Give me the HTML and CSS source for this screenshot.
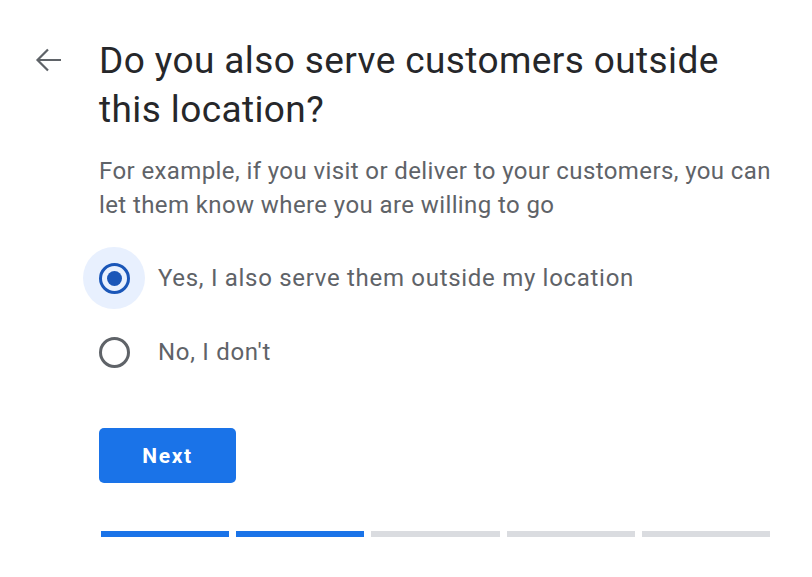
FILE: index.html
```html
<!DOCTYPE html>
<html lang="en">
<head>
<meta charset="utf-8">
<title>Service area</title>
<link rel="stylesheet" href="styles.css">
</head>
<body>
<div class="page">
  <div class="back">
    <svg class="back-icon" width="28" height="26" viewBox="0 0 28 26" aria-hidden="true">
      <path d="M26 13H3M13 2.5L2.5 13L13 23.5" fill="none" stroke="#5f6368" stroke-width="2.2" stroke-linecap="butt"/>
    </svg>
  </div>
  <div class="content">
    <h1 class="title">Do you also serve customers outside this location?</h1>
    <p class="desc">For example, if you visit or deliver to your customers, you can let them know where you are willing to go</p>
    <div class="options">
      <label class="option">
        <span class="radio-wrap selected"><span class="radio on"><span class="dot"></span></span></span>
        <span class="option-text">Yes, I also serve them outside my location</span>
      </label>
      <label class="option">
        <span class="radio-wrap"><span class="radio"></span></span>
        <span class="option-text">No, I don't</span>
      </label>
    </div>
    <button class="next" type="button">Next</button>
    <div class="progress">
      <span class="seg done"></span>
      <span class="seg done"></span>
      <span class="seg"></span>
      <span class="seg"></span>
      <span class="seg"></span>
    </div>
  </div>
</div>
</body>
</html>
```

FILE: styles.css
```css
html, body {
  margin: 0;
  padding: 0;
  background: #ffffff;
}

body {
  font-family: Roboto, "Liberation Sans", Arial, sans-serif;
}

.page {
  display: grid;
  grid-template-columns: 99px 675px;
  padding-top: 36px;
}

.back {
  padding-left: 35px;
  padding-top: 11px;
}

.back-icon {
  display: block;
}

.content {
  display: flex;
  flex-direction: column;
}

.title {
  margin: 0;
  font-family: Roboto, "Open Sans", sans-serif;
  font-weight: 400;
  font-size: 37px;
  line-height: 49px;
  color: #26272a;
  letter-spacing: 0.4px;
}

.desc {
  margin: 20px 0 0;
  font-size: 24px;
  line-height: 34px;
  letter-spacing: 0.4px;
  color: #5f6368;
}

.options {
  display: flex;
  flex-direction: column;
  gap: 12px;
  margin-top: 25px;
  margin-left: -16px;
}

.option {
  display: flex;
  align-items: center;
  gap: 13px;
  height: 62px;
}

.radio-wrap {
  width: 62px;
  height: 62px;
  border-radius: 50%;
  display: flex;
  align-items: center;
  justify-content: center;
}

.radio-wrap.selected {
  background: #e8f0fe;
}

.radio {
  box-sizing: border-box;
  width: 31px;
  height: 31px;
  border: 3px solid #5f6368;
  border-radius: 50%;
  display: flex;
  align-items: center;
  justify-content: center;
}

.radio.on {
  border-color: #1a56b8;
}

.dot {
  width: 15px;
  height: 15px;
  border-radius: 50%;
  background: #1a56b8;
}

.option-text {
  font-size: 24px;
  letter-spacing: 0.7px;
  color: #5f6368;
}

.next {
  align-self: flex-start;
  margin-top: 45px;
  width: 137px;
  height: 55px;
  border: none;
  border-radius: 5px;
  background: #1a73e8;
  color: #ffffff;
  font-family: Roboto, sans-serif;
  font-weight: 700;
  font-size: 21px;
  letter-spacing: 1.6px;
}

.progress {
  display: flex;
  gap: 7px;
  margin-top: 48px;
  padding-left: 2px;
  padding-right: 4px;
}

.seg {
  flex: 1;
  height: 6px;
  background: #dadce0;
}

.seg.done {
  background: #1a73e8;
}
```
